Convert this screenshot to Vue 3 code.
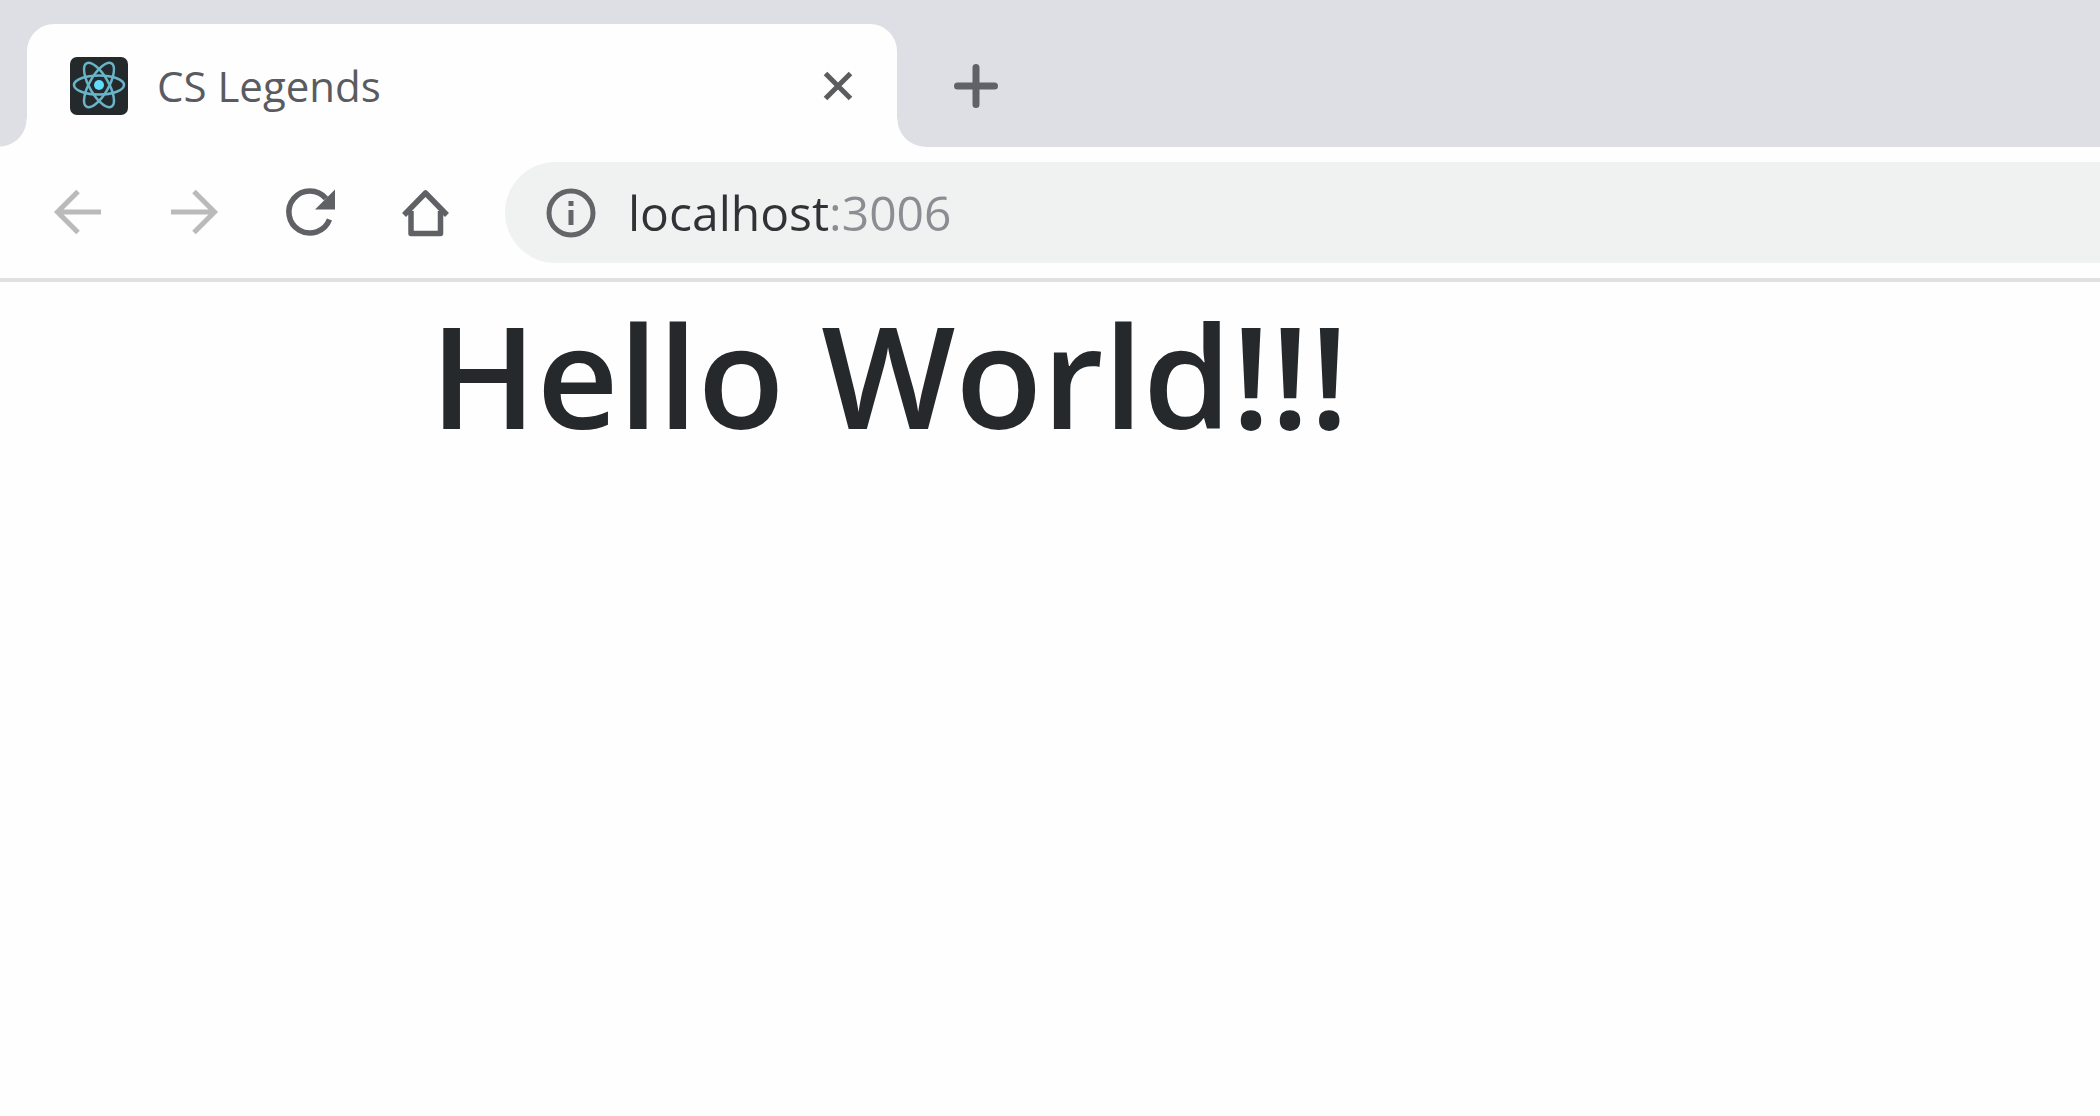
<script setup>
import { ref } from 'vue'

const title = ref('CS Legends')
const address = ref('localhost:3006')
</script>

<template>
  <div class="browser">
    <header>
      <div class="tab-strip">
        <div class="tab">
          <svg class="favicon" viewBox="0 0 58 58" aria-hidden="true">
            <rect width="58" height="58" rx="7" fill="#24292b" />
            <g fill="none" stroke="#68b4c8" stroke-width="2.500">
              <ellipse cx="29" cy="28" rx="25" ry="9.500" />
              <ellipse cx="29" cy="28" rx="25" ry="9.500" transform="rotate(60 29 28)" />
              <ellipse cx="29" cy="28" rx="25" ry="9.500" transform="rotate(120 29 28)" />
            </g>
            <circle cx="29" cy="28" r="5" fill="#61dafb" />
          </svg>
          <span class="tab-title">{{ title }}</span>
          <button class="icon-button close" type="button" aria-label="Close tab">
            <svg width="32" height="32" viewBox="0 0 32 32">
              <path d="M3.500 3.500 28.500 28.500M28.500 3.500 3.500 28.500" fill="none" stroke="#5b5c5e" stroke-width="5" />
            </svg>
          </button>
        </div>
        <button class="icon-button new-tab" type="button" aria-label="New tab">
          <svg width="44" height="44" viewBox="0 0 44 44">
            <path d="M22 3.500V40.500M3.500 22H40.500" fill="none" stroke="#5f6368" stroke-width="7" stroke-linecap="round" />
          </svg>
        </button>
      </div>

      <nav class="toolbar" aria-label="Navigation">
        <button class="icon-button nav" type="button" aria-label="Back">
          <svg width="60" height="60" viewBox="0 0 60 60">
            <path d="M53 29H9M30 8.500 9.500 29 30 49.500" fill="none" stroke="#bababb" stroke-width="5" />
          </svg>
        </button>
        <button class="icon-button nav" type="button" aria-label="Forward">
          <svg width="60" height="60" viewBox="0 0 60 60">
            <path d="M7 29H51M30 8.500 50.500 29 30 49.500" fill="none" stroke="#bababb" stroke-width="5" />
          </svg>
        </button>
        <button class="icon-button nav" type="button" aria-label="Reload">
          <svg width="60" height="60" viewBox="0 0 60 60">
            <path d="M49.500 36.500A21 21 0 1 1 46 15.500" fill="none" stroke="#5f6165" stroke-width="5.500" />
            <path d="M55 6.500V26.500H35Z" fill="#5f6165" />
          </svg>
        </button>
        <button class="icon-button nav" type="button" aria-label="Home">
          <svg width="60" height="60" viewBox="0 0 60 60">
            <path d="M8 32 29.500 10 51 32M15 28V50.500H44.500V28" fill="none" stroke="#5f6165" stroke-width="5.500" stroke-linejoin="round" />
          </svg>
        </button>
        <label class="omnibox">
          <svg width="50" height="50" viewBox="0 0 50 50" aria-hidden="true">
            <circle cx="25" cy="25" r="22" fill="none" stroke="#636568" stroke-width="5" />
            <path d="M22.500 13H27.500V18H22.500ZM22.500 22H27.500V37H22.500Z" fill="#636568" />
          </svg>
          <input v-model="address" class="address" type="text" aria-label="Address" spellcheck="false" />
        </label>
      </nav>
    </header>

    <main class="page">
      <h1>Hello World!!!</h1>
    </main>
  </div>
</template>

<style>
body {
  margin: 0;
  background: #fefefe;
}
</style>

<style scoped>
.browser {
  font-family: "Segoe UI", "Open Sans", "Noto Sans", sans-serif;
}

.tab-strip {
  display: flex;
  align-items: center;
  padding: 24px 27px 0;
  background: #dedfe5;
}

.tab {
  position: relative;
  display: flex;
  align-items: center;
  box-sizing: border-box;
  width: 870px;
  height: 123px;
  padding: 0 43px;
  border-radius: 27px 27px 0 0;
  background: #fefefe;
}

/* Flared feet that join the active tab to the toolbar */
.tab::before,
.tab::after {
  content: "";
  position: absolute;
  bottom: 0;
  width: 28px;
  height: 28px;
}

.tab::before {
  right: 100%;
  background: radial-gradient(circle at 0 0, transparent 27px, #fefefe 28px);
}

.tab::after {
  left: 100%;
  background: radial-gradient(circle at 100% 0, transparent 27px, #fefefe 28px);
}

.favicon {
  width: 58px;
  height: 58px;
}

.tab-title {
  flex: 1;
  margin-left: 29px;
  font-size: 42px;
  line-height: 60px;
  color: #5a5b60;
}

.icon-button {
  display: flex;
  align-items: center;
  justify-content: center;
  padding: 0;
  border: 0;
  background: none;
}

.new-tab {
  margin-left: 57px;
}

.toolbar {
  display: flex;
  align-items: center;
  padding: 15px 0 15px 20px;
  border-bottom: 4px solid #e1e1e1;
}

.nav {
  width: 116px;
  height: 60px;
}

.omnibox {
  display: flex;
  flex: 1;
  align-items: center;
  height: 101px;
  margin-left: 21px;
  padding-left: 41px;
  border-radius: 51px 0 0 51px;
  background: #f0f2f1;
}

/* The host is dark and the port is grey within one editable field */
.address {
  flex: 1;
  min-width: 0;
  height: 72px;
  margin-left: 32px;
  padding: 0;
  border: 0;
  outline: 0;
  font-family: inherit;
  font-size: 48px;
  color: transparent;
  caret-color: #303134;
  background: linear-gradient(to right, #303236 202px, #8b8d92 202px);
  background-clip: text;
}

.page {
  padding: 0 430px;
}

h1 {
  margin: 0;
  font-size: 142px;
  font-weight: 600;
  line-height: 184px;
  white-space: nowrap;
  color: #26292b;
}
</style>
